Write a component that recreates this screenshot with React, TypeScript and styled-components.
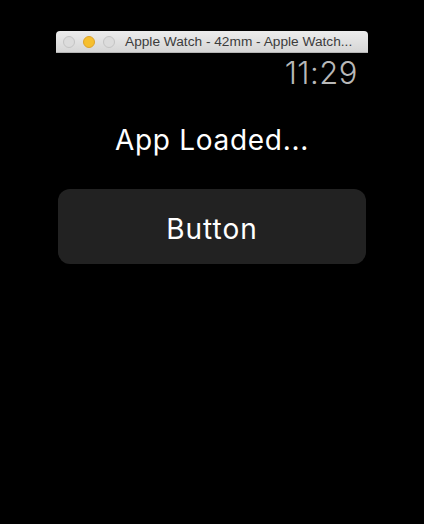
import styled, { createGlobalStyle } from "styled-components";

const GlobalStyle = createGlobalStyle`
  html, body {
    margin: 0;
    padding: 0;
    background: #000;
  }
`

const Screen = styled.div`
  width: 424px;
  height: 524px;
  background: #000;
  display: flex;
  flex-direction: column;
  align-items: center;
  padding-top: 31px;
  box-sizing: border-box;
  font-family: 'Inter', 'Noto Sans', sans-serif;
`

const TitleBar = styled.div`
  width: 312px;
  height: 22px;
  box-sizing: border-box;
  display: flex;
  align-items: center;
  gap: 8px;
  padding-left: 7px;
  background: linear-gradient(#ececec, #d6d6d6);
  border-radius: 4px 4px 0 0;
  border-bottom: 1px solid #b5b5b5;
`

const Lights = styled.div`
  display: flex;
  gap: 8px;
`

const Light = styled.span<{ $color: string; $border: string }>`
  width: 12px;
  height: 12px;
  border-radius: 50%;
  box-sizing: border-box;
  background: ${p => p.$color};
  border: 1px solid ${p => p.$border};
`

const Title = styled.div`
  font-family: 'Liberation Sans', 'Noto Sans', sans-serif;
  font-size: 13.7px;
  color: #3c3c3c;
  white-space: nowrap;
  padding-left: 2px;
`

const Watch = styled.div`
  width: 308px;
  display: flex;
  flex-direction: column;
  align-items: center;
`

const Clock = styled.div`
  align-self: flex-end;
  margin-right: 8px;
  margin-top: 2px;
  font-size: 31px;
  font-weight: 300;
  color: #b8b8b8;
  line-height: 36px;
  letter-spacing: 0.5px;
`

const Label = styled.div`
  margin-top: 32px;
  font-size: 28px;
  color: #fff;
  line-height: 34px;
  letter-spacing: 0.7px;
`

const Button = styled.div`
  margin-top: 32px;
  width: 308px;
  height: 75px;
  box-sizing: border-box;
  padding-top: 4px;
  border-radius: 12px;
  background: #222222;
  color: #fff;
  font-size: 28px;
  letter-spacing: 1px;
  display: flex;
  align-items: center;
  justify-content: center;
`

export default function App() {
  return (
    <>
      <GlobalStyle />
      <Screen>
        <TitleBar>
          <Lights>
            <Light $color="#dcdcdc" $border="#c4c4c4" />
            <Light $color="#f6bf2e" $border="#dea32a" />
            <Light $color="#dcdcdc" $border="#c4c4c4" />
          </Lights>
          <Title>Apple Watch - 42mm - Apple Watch...</Title>
        </TitleBar>
        <Watch>
          <Clock>11:29</Clock>
          <Label>App Loaded...</Label>
          <Button>Button</Button>
        </Watch>
      </Screen>
    </>
  )
}
